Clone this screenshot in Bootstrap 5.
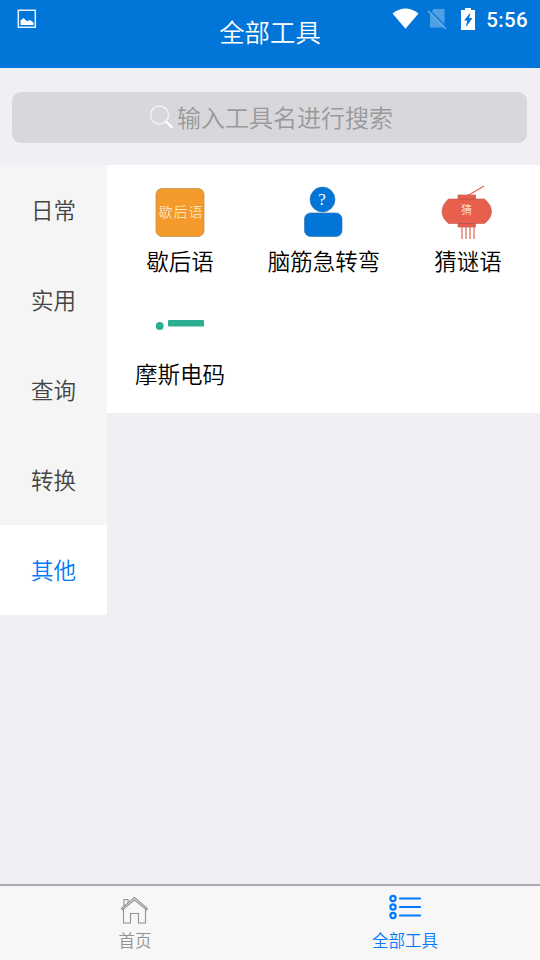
<!DOCTYPE html>
<html lang="zh-CN">
<head>
<meta charset="utf-8">
<meta name="viewport" content="width=device-width, initial-scale=1">
<title>全部工具</title>
<link href="https://cdn.jsdelivr.net/npm/bootstrap@5.3.0/dist/css/bootstrap.min.css" rel="stylesheet">
<style>
body{background:#efeff4;font-family:"Noto Sans CJK SC",sans-serif;font-weight:350;color:#000;height:960px;overflow:hidden}
svg{display:block;flex:none}
.app-header{height:68px;background:#0275d8;color:#fff}
.app-title{font-size:25.4px;line-height:62px}
.status{top:0;left:0;right:0;height:38px;padding:0 12px 0 17px}
.clock{font:500 20.5px/38px Roboto,sans-serif;letter-spacing:.35px;margin-left:11px;padding-top:2px}
.search-wrap{padding:24px 13px 22px 12px}
.search-box{height:51px;border-radius:9px;background:#d8d7dc;color:#999;font-size:24px;line-height:48px;padding-left:3px}
.search-box span{padding-bottom:2px}
.search-box svg{margin-right:3px}
.side{width:107px;background:#f5f5f5}
.side a{height:90px;font-size:22.5px;line-height:88px;color:#444;text-decoration:none}
.side a.current{background:#fff;color:#007aff}
.tools{background:#fff;height:248px;padding-left:1px}
.tool{height:113px;padding-top:20px;font-size:22.5px;line-height:34px}
.tool svg{margin-bottom:3px}
.tabs{height:76px;border-top:2px solid #a9a8ae;background:#f7f7f7;font-size:16.5px;line-height:24px;color:#929292}
.tabs .current{color:#007aff}
.tabs svg{margin-top:7px;margin-bottom:3px}
</style>
</head>
<body class="d-flex flex-column">
<header class="app-header position-relative text-center flex-shrink-0">
  <div class="app-title">全部工具</div>
  <div class="status position-absolute d-flex align-items-center">
    <svg width="20" height="20" viewBox="0 0 20 20"><path d="M1.300 1.300h17v17h-17z" fill="none" stroke="#e4f1fc" stroke-width="1.500"/><path d="M3.500 16v-4.500l3-2.500 3.500 3.200 3-1.200 3.500 2.500V16z" fill="#fff"/></svg>
    <svg class="ms-auto" width="28" height="22" viewBox="0 0 28 22"><path d="M.5 5.500Q13.500-4.500 26.500 5.500L13.500 20.700z" fill="#fff"/></svg>
    <svg width="20" height="22" viewBox="0 0 20 22" style="margin-left:7px"><path d="M7 1h10.500v18.500H3V5z" fill="#4e9fe4"/><path d="M2.300 1.800 20 19.500" stroke="#0275d8" stroke-width="1.200"/><path d="M.8 2.800 19 21" stroke="#61aae7" stroke-width="1.600"/></svg>
    <svg width="14" height="24" viewBox="0 0 14 24" style="margin-left:14px"><path d="M0 3h4V1h6v2h4v20H0z" fill="#fff"/><path d="M9.500 5.500 3 13.500H6.200L5 20l6.500-9H8.200z" fill="#0275d8"/></svg>
    <span class="clock">5:56</span>
  </div>
</header>
<div class="search-wrap flex-shrink-0">
  <div class="search-box d-flex justify-content-center align-items-center">
    <svg width="25" height="25" viewBox="0 0 25 25" fill="none" stroke="#f2f2f5"><circle cx="10.500" cy="10" r="9" stroke-width="1.500"/><path d="m17 16.500 6.500 6.500" stroke="#fff" stroke-width="2.200"/></svg>
    <span>输入工具名进行搜索</span>
  </div>
</div>
<main class="d-flex align-items-start flex-grow-1">
  <nav class="side d-flex flex-column text-center flex-shrink-0">
    <a href="#">日常</a><a href="#">实用</a><a href="#">查询</a><a href="#">转换</a><a href="#" class="current">其他</a>
  </nav>
  <section class="tools flex-grow-1">
    <div class="row g-0">
      <div class="tool col-4 d-flex flex-column align-items-center">
        <svg width="54" height="55" viewBox="0 0 54 55"><rect x="3" y="3.500" width="48" height="48" rx="6" fill="#f49a2a" stroke="#b98a4b" stroke-width=".7"/><text x="5.500" y="32" font-size="14" letter-spacing="1" font-weight="300" fill="#fff3dd">歇后语</text></svg>
        <span>歇后语</span>
      </div>
      <div class="tool col-4 d-flex flex-column align-items-center">
        <svg width="54" height="55" viewBox="0 0 54 55"><circle cx="25.500" cy="14.500" r="12.500" fill="#0275d8" stroke="#3577af" stroke-width=".6"/><rect x="7.500" y="28" width="37.500" height="23.500" rx="6" fill="#0275d8" stroke="#3577af" stroke-width=".7"/><text x="25" y="19.500" text-anchor="middle" font-family="Liberation Serif,serif" font-size="17" fill="#fff">?</text></svg>
        <span>脑筋急转弯</span>
      </div>
      <div class="tool col-4 d-flex flex-column align-items-center">
        <svg width="54" height="55" viewBox="0 0 54 55"><path d="M26 11 43 1M21 41v13M25 41v13M29 41v13M33 41v13" fill="none" stroke="#e9604f" stroke-width="1.200"/><path d="M17 10H34.500v4h9Q50.500 20 50.500 26.500T43.500 38.500h-9V42H17v-3.500H7.500Q1 33 1 26.500T7.500 14H17z" fill="#e95f4e" stroke="#bd6558" stroke-width=".7"/><path d="M17 14H34.500M17 38.500H34.500" stroke="#ad5447" stroke-width=".8"/><text x="25.500" y="28.500" text-anchor="middle" font-size="11" font-weight="300" fill="#fff">猜</text></svg>
        <span>猜谜语</span>
      </div>
      <div class="tool col-4 d-flex flex-column align-items-center">
        <svg width="54" height="55" viewBox="0 0 54 55"><circle cx="6.700" cy="28" r="3.900" fill="#2bad90"/><rect x="15" y="22" width="36" height="6.500" rx="1" fill="#2bad90"/></svg>
        <span>摩斯电码</span>
      </div>
    </div>
  </section>
</main>
<nav class="tabs d-flex flex-shrink-0">
  <div class="w-50 d-flex flex-column align-items-center">
    <svg width="30" height="32" viewBox="0 0 30 32" fill="none" stroke="#929292" stroke-width="1.100"><path d="M1.500 15.500 14.500 4.500l13 11-1 1.200-12-9.700-12 9.700zM4 13V6.500h4V10M3.500 16.500v13.500h7V20.500h8v9.500h7V16.500"/></svg>
    <span>首页</span>
  </div>
  <div class="current w-50 d-flex flex-column align-items-center">
    <svg width="32" height="32" viewBox="0 0 32 32" fill="none" stroke="#007aff" stroke-width="2.200"><circle cx="4" cy="5.500" r="2.600"/><circle cx="4" cy="14" r="2.600"/><circle cx="4" cy="22.500" r="2.600"/><path d="M11 5.500h20M11 14h20M11 22.500h20" stroke-linecap="round"/></svg>
    <span>全部工具</span>
  </div>
</nav>
<script src="https://cdn.jsdelivr.net/npm/bootstrap@5.3.0/dist/js/bootstrap.bundle.min.js"></script>
</body>
</html>
